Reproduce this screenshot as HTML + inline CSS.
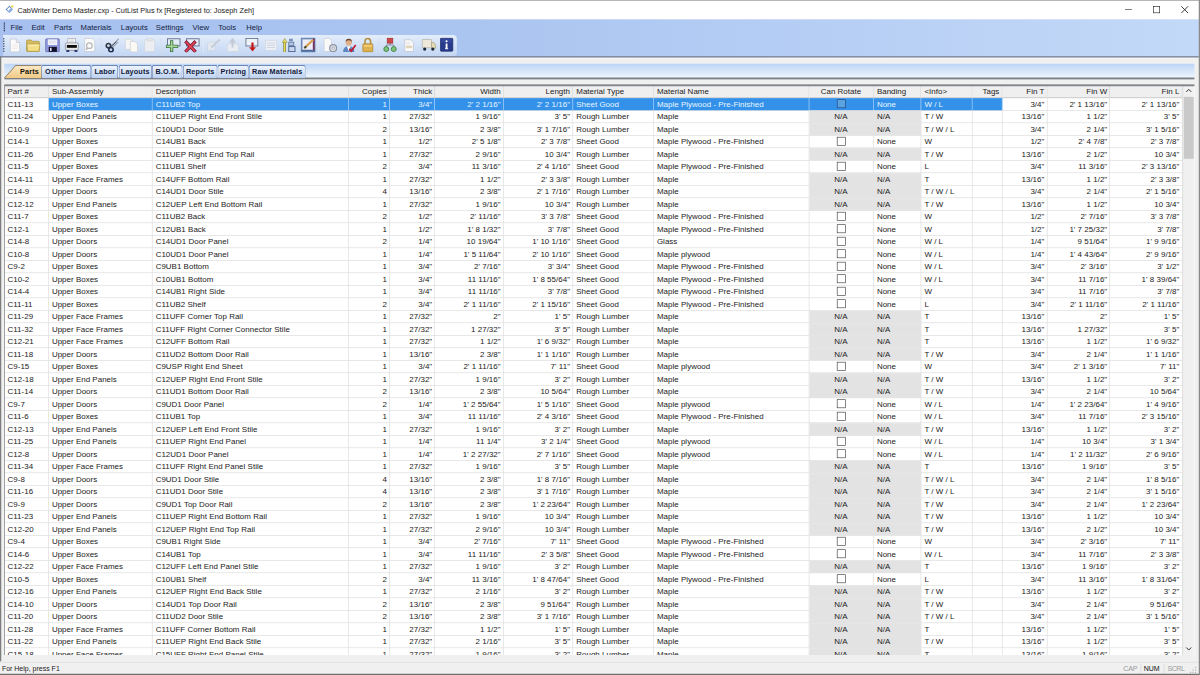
<!DOCTYPE html><html><head><meta charset="utf-8"><title>CutList</title><style>
*{margin:0;padding:0;box-sizing:border-box}
html,body{width:1200px;height:675px;overflow:hidden;background:#f0f0f0}
#w{position:absolute;left:0;top:0;width:1920px;height:1080px;transform:scale(0.625);transform-origin:0 0;background:#f0f0f0;font-family:"Liberation Sans",sans-serif;overflow:hidden}
.a{position:absolute}
#title{left:0;top:0;width:1920px;height:31px;background:#fff;border-top:1px solid #8a8a8a}
#title .t{left:28px;top:8.5px;font-size:11.7px;color:#1a1a1a;white-space:nowrap}
#bar{left:0;top:31px;width:1920px;height:60px;background:linear-gradient(to right,#a7c0ef 0%,#abc5f1 40%,#c3d9f8 100%)}
#menu{left:0;top:31px;height:24px;width:1920px}
.mi{position:absolute;top:7px;font-size:12.3px;color:#14223f;white-space:nowrap}
#tb{left:5px;top:56px;width:726px;height:34px;border-radius:0 6px 6px 0;background:linear-gradient(#e3edfb,#cfdff6 60%,#c3d6f3)}
#tbline{left:0;top:89.5px;width:1918px;height:2.2px;background:#6f798c;box-shadow:0 1.5px 0 #fafbfc}
.grip{position:absolute;width:2px;height:2px;background:#33405a}
#strip{left:7px;top:102px;width:1904px;height:23px;background:linear-gradient(#bdd5f6,#f0f6fe)}
#stripline{left:7px;top:124px;width:1904px;height:3px;background:#7b8087}
.tab{position:absolute;top:104px;height:21px;border:1px solid #4f6b9f;border-bottom:none;border-radius:4px 4px 0 0;background:linear-gradient(#f0f5fd,#bcd1f1);font-weight:bold;font-size:11.6px;letter-spacing:0.25px;color:#101a3c;text-align:center;padding-top:2.6px;white-space:nowrap}
#grid{left:7px;top:136px;width:1904px;height:912px;background:#fff;border-left:1.5px solid #6c6f75;border-top:1.5px solid #85888d;overflow:hidden}
.hd{position:absolute;top:0;height:20px;border-top:1px solid #fafafa;background:#efefef;border-right:1px solid #cfcfcf;border-bottom:1px solid #b8b8b8;font-size:12.7px;letter-spacing:0.06px;color:#222;padding-top:1.8px;white-space:nowrap;overflow:hidden}
.c{position:absolute;height:20px;border-right:1px solid #dadada;border-bottom:1px solid #dadada;font-size:12.7px;letter-spacing:0.06px;color:#222;padding-top:3.15px;white-space:nowrap;overflow:hidden}
.l{text-align:left;padding-left:5.5px}
.r{text-align:right;padding-right:3.5px}
.ce{text-align:center}
.na{background:#e3e3e3;border-right-color:#e3e3e3;border-bottom-color:#e3e3e3}
.sel{background:#3391e9;color:#eaf6ff;border-right-color:#c4e2ff;border-bottom-color:#dadada}
.cb{display:inline-block;width:14px;height:14px;border:1.5px solid #3a3a3a;background:#fff;margin-top:-0.5px;margin-left:1px;vertical-align:top}
.sel .cb{background:#5aa2e0;border-color:#173c78}
#sb{left:1892px;top:136px;width:18px;height:912px;background:#f0f0f0;border-left:1px solid #d6d6d6}
#thumb{left:1893.5px;top:154.5px;width:16px;height:99px;background:#c9c9c9}
#status{left:0;top:1059px;width:1920px;height:21px;background:#f0f0f0;border-top:1px solid #d8d8d8;border-bottom:2px solid #6e6e6e}
.st{position:absolute;top:4px;font-size:11.2px;color:#222;white-space:nowrap}
</style></head><body><div id="w">
<div class="a" style="left:0;top:90px;width:2px;height:968px;background:#7d7d7d;z-index:5"></div>
<div class="a" style="left:1918px;top:0;width:2px;height:1080px;background:#8a8a8a;z-index:5"></div>
<div class="a" id="title">
<svg class="a" style="left:7px;top:6px" width="16" height="16" viewBox="0 0 16 16"><path d="M2 8 L8 2 L11 5 L5 11 Z" fill="#5b86c8"/><path d="M5 11 L11 5 L14 8 L8 14 Z" fill="#8fb0e0"/><path d="M4 8 L8 4 L10 6 L6 10 Z" fill="#fff"/><circle cx="12.5" cy="3.5" r="2" fill="#f0d860"/></svg>
<div class="a t">CabWriter Demo Master.cxp - CutList Plus fx [Registered to: Joseph Zeh]</div>
<div class="a" style="left:1800px;top:13.5px;width:10.5px;height:1.2px;background:#333"></div>
<div class="a" style="left:1845px;top:9px;width:11px;height:11px;border:1.5px solid #222"></div>
<svg class="a" style="left:1889px;top:8px" width="13" height="13" viewBox="0 0 13 13"><path d="M1 1 L12 12 M12 1 L1 12" stroke="#222" stroke-width="1.4"/></svg>
</div>
<div class="a" id="bar"></div>
<div class="grip" style="left:6px;top:36px"></div>
<div class="grip" style="left:6px;top:39px"></div>
<div class="grip" style="left:6px;top:42px"></div>
<div class="grip" style="left:6px;top:45px"></div>
<div class="grip" style="left:6px;top:48px"></div>
<div class="mi" style="left:16.8px;top:36.5px">File</div>
<div class="mi" style="left:50.4px;top:36.5px">Edit</div>
<div class="mi" style="left:86.6px;top:36.5px">Parts</div>
<div class="mi" style="left:128.8px;top:36.5px">Materials</div>
<div class="mi" style="left:193.4px;top:36.5px">Layouts</div>
<div class="mi" style="left:249.4px;top:36.5px">Settings</div>
<div class="mi" style="left:308px;top:36.5px">View</div>
<div class="mi" style="left:349px;top:36.5px">Tools</div>
<div class="mi" style="left:394px;top:36.5px">Help</div>
<div class="a" id="tb"></div>
<div class="a" id="tbline"></div>
<div class="grip" style="left:5px;top:61px"></div>
<div class="grip" style="left:5px;top:65px"></div>
<div class="grip" style="left:5px;top:69px"></div>
<div class="grip" style="left:5px;top:73px"></div>
<div class="grip" style="left:5px;top:77px"></div>
<div class="grip" style="left:5px;top:81px"></div>
<svg class="a" style="left:15px;top:60px" width="24" height="24" viewBox="0 0 24 24"><path d="M1.5 2.5 H11 L16.5 8 V23 H1.5 Z" fill="#fbfbfd" stroke="#b9bcc6" stroke-width="1"/><path d="M11 2.5 V8 H16.5" fill="#e8e8ee" stroke="#b9bcc6" stroke-width="1"/><path d="M4 12 H14 M4 15 H14 M4 18 H12" stroke="#eadfd8" stroke-width="1"/></svg>
<svg class="a" style="left:41px;top:60px" width="24" height="24" viewBox="0 0 24 24"><path d="M1.5 6 Q1.5 4 3.5 4 H9 L11 6 H20 Q22 6 22 8 V21 Q22 22.5 20.5 22.5 H3 Q1.5 22.5 1.5 21 Z" fill="#d6bc60" stroke="#a08a40" stroke-width="1"/><path d="M2 10 H23 L21.5 22 H3 Z" fill="#f3dd85" stroke="#b09840" stroke-width="1"/><path d="M4 13 H20" stroke="#f9ebb0" stroke-width="2"/></svg>
<svg class="a" style="left:72px;top:60px" width="24" height="24" viewBox="0 0 24 24"><rect x="1" y="2" width="22" height="21" rx="1.5" fill="#8f97dc" stroke="#5c63a8" stroke-width="1"/><rect x="4.5" y="3" width="15" height="9" fill="#f4f4fb"/><path d="M6 6 H18 M6 9 H18" stroke="#c8c8e0" stroke-width="1"/><rect x="6" y="15" width="13" height="8" fill="#12122e"/><rect x="8" y="16.5" width="2.5" height="5" fill="#e8e8f8"/></svg>
<svg class="a" style="left:103px;top:60px" width="24" height="24" viewBox="0 0 24 24"><rect x="5.5" y="1.5" width="12" height="8" fill="#fafafa" stroke="#9aa0aa" stroke-width="1"/><path d="M7.5 4 H15.5 M7.5 6.5 H15.5" stroke="#bbb" stroke-width="0.8"/><rect x="1.5" y="8.5" width="21" height="12" rx="3" fill="#e6e8ec" stroke="#6f7480" stroke-width="1"/><rect x="4" y="12" width="16" height="4.5" fill="#0c0c0c"/><rect x="3" y="20" width="5" height="3" rx="1" fill="#2b3b6e"/><rect x="16" y="20" width="5" height="3" rx="1" fill="#2b3b6e"/></svg>
<svg class="a" style="left:134px;top:60px" width="24" height="24" viewBox="0 0 24 24"><path d="M1.5 1.5 H14 L17.5 5 V22.5 H1.5 Z" fill="#fbfbfb" stroke="#c0c4cc" stroke-width="1"/><circle cx="9" cy="13" r="4.5" fill="none" stroke="#b8b8b8" stroke-width="2"/><path d="M6 17 L3.5 19.5" stroke="#aaa" stroke-width="2"/></svg>
<svg class="a" style="left:168px;top:60px" width="24" height="24" viewBox="0 0 24 24"><path d="M9 15 L22 2 M10 17.5 L21 7" stroke="#9aa3b2" stroke-width="2"/><path d="M9 15 L18 7" stroke="#4a5060" stroke-width="1.5"/><circle cx="5.5" cy="13" r="3.5" fill="none" stroke="#2e3340" stroke-width="2.6"/><circle cx="9.5" cy="19.5" r="3.5" fill="none" stroke="#1f3050" stroke-width="2.6"/></svg>
<svg class="a" style="left:199px;top:60px" width="24" height="24" viewBox="0 0 24 24"><path d="M1.5 2.5 H9 L12 5.5 V19 H1.5 Z" fill="#f5f5f5" stroke="#c9ccd3" stroke-width="1"/><path d="M9.5 6.5 H17 L21 10.5 V23 H9.5 Z" fill="#fbf9f3" stroke="#c9ccd3" stroke-width="1"/></svg>
<svg class="a" style="left:230px;top:60px" width="24" height="24" viewBox="0 0 24 24"><rect x="1.5" y="3.5" width="16" height="19" rx="1" fill="#eceef2" stroke="#cfd3da" stroke-width="1"/><rect x="5.5" y="1.5" width="8" height="4" fill="#e6e8ec" stroke="#cfd3da" stroke-width="1"/></svg>
<svg class="a" style="left:264px;top:60px" width="26" height="24" viewBox="0 0 26 24"><rect x="4" y="2" width="20" height="11.5" fill="#e4ecf8" stroke="#6a7a96" stroke-width="1.6"/><path d="M10.6 4.5 V23 M1.5 14.1 H21" stroke="#3d6e40" stroke-width="5.2"/><path d="M10.6 5.5 V22 M2.5 14.1 H20" stroke="#a6d89a" stroke-width="2.6"/></svg>
<svg class="a" style="left:294px;top:60px" width="26" height="24" viewBox="0 0 26 24"><rect x="4.5" y="2" width="20" height="11.5" fill="#e8ecf6" stroke="#6a7a96" stroke-width="1.6"/><path d="M2.5 6 L19 23 M19 6 L2.5 23" stroke="#7a1c38" stroke-width="5.2"/><path d="M3.3 6.8 L18.2 22.2 M18.2 6.8 L3.3 22.2" stroke="#e84454" stroke-width="2.6"/></svg>
<svg class="a" style="left:330px;top:60px" width="24" height="24" viewBox="0 0 24 24"><path d="M2 10 L6 7 H14 V21 H2 Z" fill="#e3e8f0" stroke="#c8d0dc" stroke-width="1"/><path d="M8 16 L22 3" stroke="#c6ccd8" stroke-width="3"/></svg>
<svg class="a" style="left:362px;top:60px" width="24" height="24" viewBox="0 0 24 24"><rect x="1.5" y="10.5" width="18" height="12" fill="#e8ecf3" stroke="#cdd3dd" stroke-width="1"/><path d="M10 16 V5 M6 8 L10 3 L14 8" fill="none" stroke="#c3cad6" stroke-width="3"/></svg>
<svg class="a" style="left:392px;top:60px" width="24" height="24" viewBox="0 0 24 24"><rect x="1.5" y="1.5" width="19" height="12" fill="#eef2f9" stroke="#5c6b86" stroke-width="1.3"/><path d="M12 8 V18" stroke="#c01818" stroke-width="3.5"/><path d="M6.5 15.5 L12 22.5 L17.5 15.5 Z" fill="#c81c1c"/></svg>
<svg class="a" style="left:422px;top:60px" width="24" height="24" viewBox="0 0 24 24"><rect x="2.5" y="4.5" width="18" height="16" fill="#eceff5" stroke="#d0d6e0" stroke-width="1"/><path d="M5 9 H18 M5 12.5 H18 M5 16 H18" stroke="#cdd3de" stroke-width="1.5"/></svg>
<svg class="a" style="left:451px;top:60px" width="24" height="24" viewBox="0 0 24 24"><path d="M4.5 23 V6" stroke="#6f7030" stroke-width="4.2"/><path d="M4.5 23 V6" stroke="#e6dc58" stroke-width="2.4"/><path d="M0.5 8 L4.5 1.5 L8.5 8 Z" fill="#e8dc60" stroke="#8a8230" stroke-width="0.8"/><rect x="11.5" y="2" width="6" height="4" fill="#7890b8"/><rect x="11" y="7.5" width="8" height="5.5" fill="#b8c8e4" stroke="#5f78a4" stroke-width="1.4"/><rect x="11" y="14.5" width="10" height="8" fill="#c8d6ec" stroke="#4f6896" stroke-width="1.6"/></svg>
<svg class="a" style="left:481px;top:60px" width="24" height="24" viewBox="0 0 24 24"><rect x="1.5" y="1.5" width="21" height="21" fill="#eeeefa" stroke="#6d8ab6" stroke-width="3"/><path d="M21 1.5 V22.5" stroke="#7a3462" stroke-width="3"/><path d="M1.5 21 H22.5" stroke="#4f6c9c" stroke-width="3"/><path d="M6 17 L20 3.5" stroke="#d8a050" stroke-width="3.4"/><path d="M6 17 L9 14" stroke="#3e4a40" stroke-width="3"/></svg>
<svg class="a" style="left:517px;top:60px" width="24" height="24" viewBox="0 0 24 24"><path d="M1.5 1.5 H10 L13.5 5 V22.5 H1.5 Z" fill="#fafafa" stroke="#c4c8d0" stroke-width="1"/><circle cx="16" cy="17" r="5.5" fill="#dfe3ea" stroke="#8e96a4" stroke-width="2"/><circle cx="16" cy="17" r="2" fill="#fff" stroke="#7a8290" stroke-width="1"/></svg>
<svg class="a" style="left:547px;top:60px" width="24" height="24" viewBox="0 0 24 24"><path d="M2 23 Q2 14 11 14 Q20 14 20 23 Z" fill="#5c86c4"/><path d="M8 14 L11 22 L14 14 Z" fill="#fff"/><circle cx="11" cy="8" r="5" fill="#e2b08a"/><path d="M6 7 Q6 2 11 2 Q16 2 16 7 Q14 4 11 4.5 Q8 4 6 7 Z" fill="#6a4028"/><path d="M12 18 L15 22 L22 12" fill="none" stroke="#c01c2c" stroke-width="2.6"/></svg>
<svg class="a" style="left:579px;top:60px" width="24" height="24" viewBox="0 0 24 24"><path d="M5 11 V7 Q5 1.5 9.5 1.5 Q14 1.5 14 7 V11" fill="none" stroke="#b49040" stroke-width="2.6"/><rect x="1.5" y="10" width="16" height="13" rx="1.5" fill="#ddb050" stroke="#a87e28" stroke-width="1"/><rect x="3" y="12" width="13" height="3" fill="#f0cc70"/></svg>
<svg class="a" style="left:613px;top:60px" width="24" height="24" viewBox="0 0 24 24"><path d="M11 8 V12 M5 17 V12 H17 V17" fill="none" stroke="#7c8898" stroke-width="1.5"/><rect x="6.5" y="1" width="9" height="8" fill="#d04848" stroke="#9a2a2a" stroke-width="1"/><circle cx="5" cy="18.5" r="4" fill="#7cc47a" stroke="#3f7a3f" stroke-width="1.3"/><circle cx="17" cy="18.5" r="4" fill="#7cc47a" stroke="#3f7a3f" stroke-width="1.3"/></svg>
<svg class="a" style="left:646px;top:60px" width="24" height="24" viewBox="0 0 24 24"><path d="M1.5 3.5 H11 L15.5 8 V22.5 H1.5 Z" fill="#f9f9f9" stroke="#b9bfca" stroke-width="1"/><rect x="3.5" y="13" width="10" height="4" fill="#e0d4bc"/><path d="M3.5 9 H11" stroke="#ccc" stroke-width="1"/></svg>
<svg class="a" style="left:674px;top:60px" width="24" height="24" viewBox="0 0 24 24"><rect x="1.5" y="3.5" width="15" height="13" fill="#ece8dc" stroke="#b0ab9c" stroke-width="1"/><path d="M16.5 8 H20 L23 12 V17 H16.5 Z" fill="#e4dcb8" stroke="#a09870" stroke-width="1"/><circle cx="5.5" cy="18.5" r="2.6" fill="#1e2838"/><circle cx="18.5" cy="18.5" r="2.6" fill="#1e2838"/></svg>
<svg class="a" style="left:704px;top:60px" width="24" height="24" viewBox="0 0 24 24"><rect x="0.5" y="1" width="20" height="21" rx="1.5" fill="#26398a" stroke="#17245c" stroke-width="1"/><rect x="2" y="2.5" width="17" height="6" fill="#3a50a8" opacity="0.6"/><circle cx="10.5" cy="6" r="1.7" fill="#fff"/><path d="M10.5 9.5 V18" stroke="#fff" stroke-width="3"/><path d="M8 18 H13" stroke="#fff" stroke-width="1.5"/></svg>
<div class="a" style="left:161px;top:61px;width:1px;height:24px;background:#a9b8d0;border-right:1px solid #f4f8ff"></div>
<div class="a" style="left:257px;top:61px;width:1px;height:24px;background:#a9b8d0;border-right:1px solid #f4f8ff"></div>
<div class="a" style="left:325px;top:61px;width:1px;height:24px;background:#a9b8d0;border-right:1px solid #f4f8ff"></div>
<div class="a" style="left:509px;top:61px;width:1px;height:24px;background:#a9b8d0;border-right:1px solid #f4f8ff"></div>
<div class="a" style="left:606px;top:61px;width:1px;height:24px;background:#a9b8d0;border-right:1px solid #f4f8ff"></div>
<div class="a" id="strip"></div>
<div class="a" id="stripline"></div>
<div class="tab" style="left:65.6px;width:80.4px">Other Items</div>
<div class="tab" style="left:146.4px;width:42.900000000000006px">Labor</div>
<div class="tab" style="left:189.6px;width:53.599999999999994px">Layouts</div>
<div class="tab" style="left:243.2px;width:49.30000000000001px">B.O.M.</div>
<div class="tab" style="left:292.8px;width:55.0px">Reports</div>
<div class="tab" style="left:348px;width:50.39999999999998px">Pricing</div>
<div class="tab" style="left:398.4px;width:90.40000000000003px">Raw Materials</div>
<div class="a" style="left:6px;top:103px;width:61px;height:22px;background:#8d7b60;clip-path:polygon(0 100%,19px 1px,60px 1px,61px 100%)"></div><div class="a" style="left:6px;top:103px;width:61px;height:22px;background:linear-gradient(#fbeccd,#f1c983);clip-path:polygon(1.6px 100%,19.5px 2px,59.8px 2px,59.8px 100%)"></div>
<div class="a" style="left:32px;top:106.5px;font-weight:bold;font-size:11.6px;letter-spacing:0.25px;color:#1a140a">Parts</div>
<div class="a" style="left:7px;top:135px;width:1904px;height:2.5px;background:#7f8388;z-index:3"></div>
<div class="a" id="grid">
<div class="hd l" style="left:-1.5px;width:71.0px">Part #</div>
<div class="hd l" style="left:69.5px;width:166.0px">Sub-Assembly</div>
<div class="hd l" style="left:235.5px;width:314.0px">Description</div>
<div class="hd r" style="left:549.5px;width:66.0px">Copies</div>
<div class="hd r" style="left:615.5px;width:72.5px">Thick</div>
<div class="hd r" style="left:688.0px;width:109.5px">Width</div>
<div class="hd r" style="left:797.5px;width:111.0px">Length</div>
<div class="hd l" style="left:908.5px;width:129.0px">Material Type</div>
<div class="hd l" style="left:1037.5px;width:249.0px">Material Name</div>
<div class="hd ce" style="left:1286.5px;width:103.0px">Can Rotate</div>
<div class="hd l" style="left:1389.5px;width:76.0px">Banding</div>
<div class="hd l" style="left:1465.5px;width:82.0px">&lt;Info&gt;</div>
<div class="hd r" style="left:1547.5px;width:48.0px">Tags</div>
<div class="hd r" style="left:1595.5px;width:72.0px">Fin T</div>
<div class="hd r" style="left:1667.5px;width:100.5px">Fin W</div>
<div class="hd r" style="left:1768.0px;width:115.5px">Fin L</div>
<div class="c l" style="left:-1.5px;top:19.5px;width:71.0px">C11-13</div>
<div class="c l sel" style="left:69.5px;top:19.5px;width:166.0px">Upper Boxes</div>
<div class="c l sel" style="left:235.5px;top:19.5px;width:314.0px">C11UB2 Top</div>
<div class="c r sel" style="left:549.5px;top:19.5px;width:66.0px">1</div>
<div class="c r sel" style="left:615.5px;top:19.5px;width:72.5px">3/4"</div>
<div class="c r sel" style="left:688.0px;top:19.5px;width:109.5px">2' 2 1/16"</div>
<div class="c r sel" style="left:797.5px;top:19.5px;width:111.0px">2' 2 1/16"</div>
<div class="c l sel" style="left:908.5px;top:19.5px;width:129.0px">Sheet Good</div>
<div class="c l sel" style="left:1037.5px;top:19.5px;width:249.0px">Maple Plywood - Pre-Finished</div>
<div class="c ce sel" style="left:1286.5px;top:19.5px;width:103.0px"><span class="cb"></span></div>
<div class="c l sel" style="left:1389.5px;top:19.5px;width:76.0px">None</div>
<div class="c l sel" style="left:1465.5px;top:19.5px;width:82.0px">W / L</div>
<div class="c r sel" style="left:1547.5px;top:19.5px;width:48.0px"></div>
<div class="c r" style="left:1595.5px;top:19.5px;width:72.0px">3/4"</div>
<div class="c r" style="left:1667.5px;top:19.5px;width:100.5px">2' 1 13/16"</div>
<div class="c r" style="left:1768.0px;top:19.5px;width:115.5px">2' 1 13/16"</div>
<div class="c l" style="left:-1.5px;top:39.5px;width:71.0px">C11-24</div>
<div class="c l" style="left:69.5px;top:39.5px;width:166.0px">Upper End Panels</div>
<div class="c l" style="left:235.5px;top:39.5px;width:314.0px">C11UEP Right End Front Stile</div>
<div class="c r" style="left:549.5px;top:39.5px;width:66.0px">1</div>
<div class="c r" style="left:615.5px;top:39.5px;width:72.5px">27/32"</div>
<div class="c r" style="left:688.0px;top:39.5px;width:109.5px">1 9/16"</div>
<div class="c r" style="left:797.5px;top:39.5px;width:111.0px">3' 5"</div>
<div class="c l" style="left:908.5px;top:39.5px;width:129.0px">Rough Lumber</div>
<div class="c l" style="left:1037.5px;top:39.5px;width:249.0px">Maple</div>
<div class="c ce na" style="left:1286.5px;top:39.5px;width:103.0px">N/A</div>
<div class="c l na" style="left:1389.5px;top:39.5px;width:76.0px">N/A</div>
<div class="c l" style="left:1465.5px;top:39.5px;width:82.0px">T / W</div>
<div class="c r" style="left:1547.5px;top:39.5px;width:48.0px"></div>
<div class="c r" style="left:1595.5px;top:39.5px;width:72.0px">13/16"</div>
<div class="c r" style="left:1667.5px;top:39.5px;width:100.5px">1 1/2"</div>
<div class="c r" style="left:1768.0px;top:39.5px;width:115.5px">3' 5"</div>
<div class="c l" style="left:-1.5px;top:59.5px;width:71.0px">C10-9</div>
<div class="c l" style="left:69.5px;top:59.5px;width:166.0px">Upper Doors</div>
<div class="c l" style="left:235.5px;top:59.5px;width:314.0px">C10UD1 Door Stile</div>
<div class="c r" style="left:549.5px;top:59.5px;width:66.0px">2</div>
<div class="c r" style="left:615.5px;top:59.5px;width:72.5px">13/16"</div>
<div class="c r" style="left:688.0px;top:59.5px;width:109.5px">2 3/8"</div>
<div class="c r" style="left:797.5px;top:59.5px;width:111.0px">3' 1 7/16"</div>
<div class="c l" style="left:908.5px;top:59.5px;width:129.0px">Rough Lumber</div>
<div class="c l" style="left:1037.5px;top:59.5px;width:249.0px">Maple</div>
<div class="c ce na" style="left:1286.5px;top:59.5px;width:103.0px">N/A</div>
<div class="c l na" style="left:1389.5px;top:59.5px;width:76.0px">N/A</div>
<div class="c l" style="left:1465.5px;top:59.5px;width:82.0px">T / W / L</div>
<div class="c r" style="left:1547.5px;top:59.5px;width:48.0px"></div>
<div class="c r" style="left:1595.5px;top:59.5px;width:72.0px">3/4"</div>
<div class="c r" style="left:1667.5px;top:59.5px;width:100.5px">2 1/4"</div>
<div class="c r" style="left:1768.0px;top:59.5px;width:115.5px">3' 1 5/16"</div>
<div class="c l" style="left:-1.5px;top:79.5px;width:71.0px">C14-1</div>
<div class="c l" style="left:69.5px;top:79.5px;width:166.0px">Upper Boxes</div>
<div class="c l" style="left:235.5px;top:79.5px;width:314.0px">C14UB1 Back</div>
<div class="c r" style="left:549.5px;top:79.5px;width:66.0px">1</div>
<div class="c r" style="left:615.5px;top:79.5px;width:72.5px">1/2"</div>
<div class="c r" style="left:688.0px;top:79.5px;width:109.5px">2' 5 1/8"</div>
<div class="c r" style="left:797.5px;top:79.5px;width:111.0px">2' 3 7/8"</div>
<div class="c l" style="left:908.5px;top:79.5px;width:129.0px">Sheet Good</div>
<div class="c l" style="left:1037.5px;top:79.5px;width:249.0px">Maple Plywood - Pre-Finished</div>
<div class="c ce" style="left:1286.5px;top:79.5px;width:103.0px"><span class="cb"></span></div>
<div class="c l" style="left:1389.5px;top:79.5px;width:76.0px">None</div>
<div class="c l" style="left:1465.5px;top:79.5px;width:82.0px">W</div>
<div class="c r" style="left:1547.5px;top:79.5px;width:48.0px"></div>
<div class="c r" style="left:1595.5px;top:79.5px;width:72.0px">1/2"</div>
<div class="c r" style="left:1667.5px;top:79.5px;width:100.5px">2' 4 7/8"</div>
<div class="c r" style="left:1768.0px;top:79.5px;width:115.5px">2' 3 7/8"</div>
<div class="c l" style="left:-1.5px;top:99.5px;width:71.0px">C11-26</div>
<div class="c l" style="left:69.5px;top:99.5px;width:166.0px">Upper End Panels</div>
<div class="c l" style="left:235.5px;top:99.5px;width:314.0px">C11UEP Right End Top Rail</div>
<div class="c r" style="left:549.5px;top:99.5px;width:66.0px">1</div>
<div class="c r" style="left:615.5px;top:99.5px;width:72.5px">27/32"</div>
<div class="c r" style="left:688.0px;top:99.5px;width:109.5px">2 9/16"</div>
<div class="c r" style="left:797.5px;top:99.5px;width:111.0px">10 3/4"</div>
<div class="c l" style="left:908.5px;top:99.5px;width:129.0px">Rough Lumber</div>
<div class="c l" style="left:1037.5px;top:99.5px;width:249.0px">Maple</div>
<div class="c ce na" style="left:1286.5px;top:99.5px;width:103.0px">N/A</div>
<div class="c l na" style="left:1389.5px;top:99.5px;width:76.0px">N/A</div>
<div class="c l" style="left:1465.5px;top:99.5px;width:82.0px">T / W</div>
<div class="c r" style="left:1547.5px;top:99.5px;width:48.0px"></div>
<div class="c r" style="left:1595.5px;top:99.5px;width:72.0px">13/16"</div>
<div class="c r" style="left:1667.5px;top:99.5px;width:100.5px">2 1/2"</div>
<div class="c r" style="left:1768.0px;top:99.5px;width:115.5px">10 3/4"</div>
<div class="c l" style="left:-1.5px;top:119.5px;width:71.0px">C11-5</div>
<div class="c l" style="left:69.5px;top:119.5px;width:166.0px">Upper Boxes</div>
<div class="c l" style="left:235.5px;top:119.5px;width:314.0px">C11UB1 Shelf</div>
<div class="c r" style="left:549.5px;top:119.5px;width:66.0px">2</div>
<div class="c r" style="left:615.5px;top:119.5px;width:72.5px">3/4"</div>
<div class="c r" style="left:688.0px;top:119.5px;width:109.5px">11 3/16"</div>
<div class="c r" style="left:797.5px;top:119.5px;width:111.0px">2' 4 1/16"</div>
<div class="c l" style="left:908.5px;top:119.5px;width:129.0px">Sheet Good</div>
<div class="c l" style="left:1037.5px;top:119.5px;width:249.0px">Maple Plywood - Pre-Finished</div>
<div class="c ce" style="left:1286.5px;top:119.5px;width:103.0px"><span class="cb"></span></div>
<div class="c l" style="left:1389.5px;top:119.5px;width:76.0px">None</div>
<div class="c l" style="left:1465.5px;top:119.5px;width:82.0px">L</div>
<div class="c r" style="left:1547.5px;top:119.5px;width:48.0px"></div>
<div class="c r" style="left:1595.5px;top:119.5px;width:72.0px">3/4"</div>
<div class="c r" style="left:1667.5px;top:119.5px;width:100.5px">11 3/16"</div>
<div class="c r" style="left:1768.0px;top:119.5px;width:115.5px">2' 3 13/16"</div>
<div class="c l" style="left:-1.5px;top:139.5px;width:71.0px">C14-11</div>
<div class="c l" style="left:69.5px;top:139.5px;width:166.0px">Upper Face Frames</div>
<div class="c l" style="left:235.5px;top:139.5px;width:314.0px">C14UFF Bottom Rail</div>
<div class="c r" style="left:549.5px;top:139.5px;width:66.0px">1</div>
<div class="c r" style="left:615.5px;top:139.5px;width:72.5px">27/32"</div>
<div class="c r" style="left:688.0px;top:139.5px;width:109.5px">1 1/2"</div>
<div class="c r" style="left:797.5px;top:139.5px;width:111.0px">2' 3 3/8"</div>
<div class="c l" style="left:908.5px;top:139.5px;width:129.0px">Rough Lumber</div>
<div class="c l" style="left:1037.5px;top:139.5px;width:249.0px">Maple</div>
<div class="c ce na" style="left:1286.5px;top:139.5px;width:103.0px">N/A</div>
<div class="c l na" style="left:1389.5px;top:139.5px;width:76.0px">N/A</div>
<div class="c l" style="left:1465.5px;top:139.5px;width:82.0px">T</div>
<div class="c r" style="left:1547.5px;top:139.5px;width:48.0px"></div>
<div class="c r" style="left:1595.5px;top:139.5px;width:72.0px">13/16"</div>
<div class="c r" style="left:1667.5px;top:139.5px;width:100.5px">1 1/2"</div>
<div class="c r" style="left:1768.0px;top:139.5px;width:115.5px">2' 3 3/8"</div>
<div class="c l" style="left:-1.5px;top:159.5px;width:71.0px">C14-9</div>
<div class="c l" style="left:69.5px;top:159.5px;width:166.0px">Upper Doors</div>
<div class="c l" style="left:235.5px;top:159.5px;width:314.0px">C14UD1 Door Stile</div>
<div class="c r" style="left:549.5px;top:159.5px;width:66.0px">4</div>
<div class="c r" style="left:615.5px;top:159.5px;width:72.5px">13/16"</div>
<div class="c r" style="left:688.0px;top:159.5px;width:109.5px">2 3/8"</div>
<div class="c r" style="left:797.5px;top:159.5px;width:111.0px">2' 1 7/16"</div>
<div class="c l" style="left:908.5px;top:159.5px;width:129.0px">Rough Lumber</div>
<div class="c l" style="left:1037.5px;top:159.5px;width:249.0px">Maple</div>
<div class="c ce na" style="left:1286.5px;top:159.5px;width:103.0px">N/A</div>
<div class="c l na" style="left:1389.5px;top:159.5px;width:76.0px">N/A</div>
<div class="c l" style="left:1465.5px;top:159.5px;width:82.0px">T / W / L</div>
<div class="c r" style="left:1547.5px;top:159.5px;width:48.0px"></div>
<div class="c r" style="left:1595.5px;top:159.5px;width:72.0px">3/4"</div>
<div class="c r" style="left:1667.5px;top:159.5px;width:100.5px">2 1/4"</div>
<div class="c r" style="left:1768.0px;top:159.5px;width:115.5px">2' 1 5/16"</div>
<div class="c l" style="left:-1.5px;top:179.5px;width:71.0px">C12-12</div>
<div class="c l" style="left:69.5px;top:179.5px;width:166.0px">Upper End Panels</div>
<div class="c l" style="left:235.5px;top:179.5px;width:314.0px">C12UEP Left End Bottom Rail</div>
<div class="c r" style="left:549.5px;top:179.5px;width:66.0px">1</div>
<div class="c r" style="left:615.5px;top:179.5px;width:72.5px">27/32"</div>
<div class="c r" style="left:688.0px;top:179.5px;width:109.5px">1 9/16"</div>
<div class="c r" style="left:797.5px;top:179.5px;width:111.0px">10 3/4"</div>
<div class="c l" style="left:908.5px;top:179.5px;width:129.0px">Rough Lumber</div>
<div class="c l" style="left:1037.5px;top:179.5px;width:249.0px">Maple</div>
<div class="c ce na" style="left:1286.5px;top:179.5px;width:103.0px">N/A</div>
<div class="c l na" style="left:1389.5px;top:179.5px;width:76.0px">N/A</div>
<div class="c l" style="left:1465.5px;top:179.5px;width:82.0px">T / W</div>
<div class="c r" style="left:1547.5px;top:179.5px;width:48.0px"></div>
<div class="c r" style="left:1595.5px;top:179.5px;width:72.0px">13/16"</div>
<div class="c r" style="left:1667.5px;top:179.5px;width:100.5px">1 1/2"</div>
<div class="c r" style="left:1768.0px;top:179.5px;width:115.5px">10 3/4"</div>
<div class="c l" style="left:-1.5px;top:199.5px;width:71.0px">C11-7</div>
<div class="c l" style="left:69.5px;top:199.5px;width:166.0px">Upper Boxes</div>
<div class="c l" style="left:235.5px;top:199.5px;width:314.0px">C11UB2 Back</div>
<div class="c r" style="left:549.5px;top:199.5px;width:66.0px">2</div>
<div class="c r" style="left:615.5px;top:199.5px;width:72.5px">1/2"</div>
<div class="c r" style="left:688.0px;top:199.5px;width:109.5px">2' 11/16"</div>
<div class="c r" style="left:797.5px;top:199.5px;width:111.0px">3' 3 7/8"</div>
<div class="c l" style="left:908.5px;top:199.5px;width:129.0px">Sheet Good</div>
<div class="c l" style="left:1037.5px;top:199.5px;width:249.0px">Maple Plywood - Pre-Finished</div>
<div class="c ce" style="left:1286.5px;top:199.5px;width:103.0px"><span class="cb"></span></div>
<div class="c l" style="left:1389.5px;top:199.5px;width:76.0px">None</div>
<div class="c l" style="left:1465.5px;top:199.5px;width:82.0px">W</div>
<div class="c r" style="left:1547.5px;top:199.5px;width:48.0px"></div>
<div class="c r" style="left:1595.5px;top:199.5px;width:72.0px">1/2"</div>
<div class="c r" style="left:1667.5px;top:199.5px;width:100.5px">2' 7/16"</div>
<div class="c r" style="left:1768.0px;top:199.5px;width:115.5px">3' 3 7/8"</div>
<div class="c l" style="left:-1.5px;top:219.5px;width:71.0px">C12-1</div>
<div class="c l" style="left:69.5px;top:219.5px;width:166.0px">Upper Boxes</div>
<div class="c l" style="left:235.5px;top:219.5px;width:314.0px">C12UB1 Back</div>
<div class="c r" style="left:549.5px;top:219.5px;width:66.0px">1</div>
<div class="c r" style="left:615.5px;top:219.5px;width:72.5px">1/2"</div>
<div class="c r" style="left:688.0px;top:219.5px;width:109.5px">1' 8 1/32"</div>
<div class="c r" style="left:797.5px;top:219.5px;width:111.0px">3' 7/8"</div>
<div class="c l" style="left:908.5px;top:219.5px;width:129.0px">Sheet Good</div>
<div class="c l" style="left:1037.5px;top:219.5px;width:249.0px">Maple Plywood - Pre-Finished</div>
<div class="c ce" style="left:1286.5px;top:219.5px;width:103.0px"><span class="cb"></span></div>
<div class="c l" style="left:1389.5px;top:219.5px;width:76.0px">None</div>
<div class="c l" style="left:1465.5px;top:219.5px;width:82.0px">W</div>
<div class="c r" style="left:1547.5px;top:219.5px;width:48.0px"></div>
<div class="c r" style="left:1595.5px;top:219.5px;width:72.0px">1/2"</div>
<div class="c r" style="left:1667.5px;top:219.5px;width:100.5px">1' 7 25/32"</div>
<div class="c r" style="left:1768.0px;top:219.5px;width:115.5px">3' 7/8"</div>
<div class="c l" style="left:-1.5px;top:239.5px;width:71.0px">C14-8</div>
<div class="c l" style="left:69.5px;top:239.5px;width:166.0px">Upper Doors</div>
<div class="c l" style="left:235.5px;top:239.5px;width:314.0px">C14UD1 Door Panel</div>
<div class="c r" style="left:549.5px;top:239.5px;width:66.0px">2</div>
<div class="c r" style="left:615.5px;top:239.5px;width:72.5px">1/4"</div>
<div class="c r" style="left:688.0px;top:239.5px;width:109.5px">10 19/64"</div>
<div class="c r" style="left:797.5px;top:239.5px;width:111.0px">1' 10 1/16"</div>
<div class="c l" style="left:908.5px;top:239.5px;width:129.0px">Sheet Good</div>
<div class="c l" style="left:1037.5px;top:239.5px;width:249.0px">Glass</div>
<div class="c ce" style="left:1286.5px;top:239.5px;width:103.0px"><span class="cb"></span></div>
<div class="c l" style="left:1389.5px;top:239.5px;width:76.0px">None</div>
<div class="c l" style="left:1465.5px;top:239.5px;width:82.0px">W / L</div>
<div class="c r" style="left:1547.5px;top:239.5px;width:48.0px"></div>
<div class="c r" style="left:1595.5px;top:239.5px;width:72.0px">1/4"</div>
<div class="c r" style="left:1667.5px;top:239.5px;width:100.5px">9 51/64"</div>
<div class="c r" style="left:1768.0px;top:239.5px;width:115.5px">1' 9 9/16"</div>
<div class="c l" style="left:-1.5px;top:259.5px;width:71.0px">C10-8</div>
<div class="c l" style="left:69.5px;top:259.5px;width:166.0px">Upper Doors</div>
<div class="c l" style="left:235.5px;top:259.5px;width:314.0px">C10UD1 Door Panel</div>
<div class="c r" style="left:549.5px;top:259.5px;width:66.0px">1</div>
<div class="c r" style="left:615.5px;top:259.5px;width:72.5px">1/4"</div>
<div class="c r" style="left:688.0px;top:259.5px;width:109.5px">1' 5 11/64"</div>
<div class="c r" style="left:797.5px;top:259.5px;width:111.0px">2' 10 1/16"</div>
<div class="c l" style="left:908.5px;top:259.5px;width:129.0px">Sheet Good</div>
<div class="c l" style="left:1037.5px;top:259.5px;width:249.0px">Maple plywood</div>
<div class="c ce" style="left:1286.5px;top:259.5px;width:103.0px"><span class="cb"></span></div>
<div class="c l" style="left:1389.5px;top:259.5px;width:76.0px">None</div>
<div class="c l" style="left:1465.5px;top:259.5px;width:82.0px">W / L</div>
<div class="c r" style="left:1547.5px;top:259.5px;width:48.0px"></div>
<div class="c r" style="left:1595.5px;top:259.5px;width:72.0px">1/4"</div>
<div class="c r" style="left:1667.5px;top:259.5px;width:100.5px">1' 4 43/64"</div>
<div class="c r" style="left:1768.0px;top:259.5px;width:115.5px">2' 9 9/16"</div>
<div class="c l" style="left:-1.5px;top:279.5px;width:71.0px">C9-2</div>
<div class="c l" style="left:69.5px;top:279.5px;width:166.0px">Upper Boxes</div>
<div class="c l" style="left:235.5px;top:279.5px;width:314.0px">C9UB1 Bottom</div>
<div class="c r" style="left:549.5px;top:279.5px;width:66.0px">1</div>
<div class="c r" style="left:615.5px;top:279.5px;width:72.5px">3/4"</div>
<div class="c r" style="left:688.0px;top:279.5px;width:109.5px">2' 7/16"</div>
<div class="c r" style="left:797.5px;top:279.5px;width:111.0px">3' 3/4"</div>
<div class="c l" style="left:908.5px;top:279.5px;width:129.0px">Sheet Good</div>
<div class="c l" style="left:1037.5px;top:279.5px;width:249.0px">Maple Plywood - Pre-Finished</div>
<div class="c ce" style="left:1286.5px;top:279.5px;width:103.0px"><span class="cb"></span></div>
<div class="c l" style="left:1389.5px;top:279.5px;width:76.0px">None</div>
<div class="c l" style="left:1465.5px;top:279.5px;width:82.0px">W / L</div>
<div class="c r" style="left:1547.5px;top:279.5px;width:48.0px"></div>
<div class="c r" style="left:1595.5px;top:279.5px;width:72.0px">3/4"</div>
<div class="c r" style="left:1667.5px;top:279.5px;width:100.5px">2' 3/16"</div>
<div class="c r" style="left:1768.0px;top:279.5px;width:115.5px">3' 1/2"</div>
<div class="c l" style="left:-1.5px;top:299.5px;width:71.0px">C10-2</div>
<div class="c l" style="left:69.5px;top:299.5px;width:166.0px">Upper Boxes</div>
<div class="c l" style="left:235.5px;top:299.5px;width:314.0px">C10UB1 Bottom</div>
<div class="c r" style="left:549.5px;top:299.5px;width:66.0px">1</div>
<div class="c r" style="left:615.5px;top:299.5px;width:72.5px">3/4"</div>
<div class="c r" style="left:688.0px;top:299.5px;width:109.5px">11 11/16"</div>
<div class="c r" style="left:797.5px;top:299.5px;width:111.0px">1' 8 55/64"</div>
<div class="c l" style="left:908.5px;top:299.5px;width:129.0px">Sheet Good</div>
<div class="c l" style="left:1037.5px;top:299.5px;width:249.0px">Maple Plywood - Pre-Finished</div>
<div class="c ce" style="left:1286.5px;top:299.5px;width:103.0px"><span class="cb"></span></div>
<div class="c l" style="left:1389.5px;top:299.5px;width:76.0px">None</div>
<div class="c l" style="left:1465.5px;top:299.5px;width:82.0px">W / L</div>
<div class="c r" style="left:1547.5px;top:299.5px;width:48.0px"></div>
<div class="c r" style="left:1595.5px;top:299.5px;width:72.0px">3/4"</div>
<div class="c r" style="left:1667.5px;top:299.5px;width:100.5px">11 7/16"</div>
<div class="c r" style="left:1768.0px;top:299.5px;width:115.5px">1' 8 39/64"</div>
<div class="c l" style="left:-1.5px;top:319.5px;width:71.0px">C14-4</div>
<div class="c l" style="left:69.5px;top:319.5px;width:166.0px">Upper Boxes</div>
<div class="c l" style="left:235.5px;top:319.5px;width:314.0px">C14UB1 Right Side</div>
<div class="c r" style="left:549.5px;top:319.5px;width:66.0px">1</div>
<div class="c r" style="left:615.5px;top:319.5px;width:72.5px">3/4"</div>
<div class="c r" style="left:688.0px;top:319.5px;width:109.5px">11 11/16"</div>
<div class="c r" style="left:797.5px;top:319.5px;width:111.0px">3' 7/8"</div>
<div class="c l" style="left:908.5px;top:319.5px;width:129.0px">Sheet Good</div>
<div class="c l" style="left:1037.5px;top:319.5px;width:249.0px">Maple Plywood - Pre-Finished</div>
<div class="c ce" style="left:1286.5px;top:319.5px;width:103.0px"><span class="cb"></span></div>
<div class="c l" style="left:1389.5px;top:319.5px;width:76.0px">None</div>
<div class="c l" style="left:1465.5px;top:319.5px;width:82.0px">W</div>
<div class="c r" style="left:1547.5px;top:319.5px;width:48.0px"></div>
<div class="c r" style="left:1595.5px;top:319.5px;width:72.0px">3/4"</div>
<div class="c r" style="left:1667.5px;top:319.5px;width:100.5px">11 7/16"</div>
<div class="c r" style="left:1768.0px;top:319.5px;width:115.5px">3' 7/8"</div>
<div class="c l" style="left:-1.5px;top:339.5px;width:71.0px">C11-11</div>
<div class="c l" style="left:69.5px;top:339.5px;width:166.0px">Upper Boxes</div>
<div class="c l" style="left:235.5px;top:339.5px;width:314.0px">C11UB2 Shelf</div>
<div class="c r" style="left:549.5px;top:339.5px;width:66.0px">2</div>
<div class="c r" style="left:615.5px;top:339.5px;width:72.5px">3/4"</div>
<div class="c r" style="left:688.0px;top:339.5px;width:109.5px">2' 1 11/16"</div>
<div class="c r" style="left:797.5px;top:339.5px;width:111.0px">2' 1 15/16"</div>
<div class="c l" style="left:908.5px;top:339.5px;width:129.0px">Sheet Good</div>
<div class="c l" style="left:1037.5px;top:339.5px;width:249.0px">Maple Plywood - Pre-Finished</div>
<div class="c ce" style="left:1286.5px;top:339.5px;width:103.0px"><span class="cb"></span></div>
<div class="c l" style="left:1389.5px;top:339.5px;width:76.0px">None</div>
<div class="c l" style="left:1465.5px;top:339.5px;width:82.0px">L</div>
<div class="c r" style="left:1547.5px;top:339.5px;width:48.0px"></div>
<div class="c r" style="left:1595.5px;top:339.5px;width:72.0px">3/4"</div>
<div class="c r" style="left:1667.5px;top:339.5px;width:100.5px">2' 1 11/16"</div>
<div class="c r" style="left:1768.0px;top:339.5px;width:115.5px">2' 1 11/16"</div>
<div class="c l" style="left:-1.5px;top:359.5px;width:71.0px">C11-29</div>
<div class="c l" style="left:69.5px;top:359.5px;width:166.0px">Upper Face Frames</div>
<div class="c l" style="left:235.5px;top:359.5px;width:314.0px">C11UFF Corner Top Rail</div>
<div class="c r" style="left:549.5px;top:359.5px;width:66.0px">1</div>
<div class="c r" style="left:615.5px;top:359.5px;width:72.5px">27/32"</div>
<div class="c r" style="left:688.0px;top:359.5px;width:109.5px">2"</div>
<div class="c r" style="left:797.5px;top:359.5px;width:111.0px">1' 5"</div>
<div class="c l" style="left:908.5px;top:359.5px;width:129.0px">Rough Lumber</div>
<div class="c l" style="left:1037.5px;top:359.5px;width:249.0px">Maple</div>
<div class="c ce na" style="left:1286.5px;top:359.5px;width:103.0px">N/A</div>
<div class="c l na" style="left:1389.5px;top:359.5px;width:76.0px">N/A</div>
<div class="c l" style="left:1465.5px;top:359.5px;width:82.0px">T</div>
<div class="c r" style="left:1547.5px;top:359.5px;width:48.0px"></div>
<div class="c r" style="left:1595.5px;top:359.5px;width:72.0px">13/16"</div>
<div class="c r" style="left:1667.5px;top:359.5px;width:100.5px">2"</div>
<div class="c r" style="left:1768.0px;top:359.5px;width:115.5px">1' 5"</div>
<div class="c l" style="left:-1.5px;top:379.5px;width:71.0px">C11-32</div>
<div class="c l" style="left:69.5px;top:379.5px;width:166.0px">Upper Face Frames</div>
<div class="c l" style="left:235.5px;top:379.5px;width:314.0px">C11UFF Right Corner Connector Stile</div>
<div class="c r" style="left:549.5px;top:379.5px;width:66.0px">1</div>
<div class="c r" style="left:615.5px;top:379.5px;width:72.5px">27/32"</div>
<div class="c r" style="left:688.0px;top:379.5px;width:109.5px">1 27/32"</div>
<div class="c r" style="left:797.5px;top:379.5px;width:111.0px">3' 5"</div>
<div class="c l" style="left:908.5px;top:379.5px;width:129.0px">Rough Lumber</div>
<div class="c l" style="left:1037.5px;top:379.5px;width:249.0px">Maple</div>
<div class="c ce na" style="left:1286.5px;top:379.5px;width:103.0px">N/A</div>
<div class="c l na" style="left:1389.5px;top:379.5px;width:76.0px">N/A</div>
<div class="c l" style="left:1465.5px;top:379.5px;width:82.0px">T</div>
<div class="c r" style="left:1547.5px;top:379.5px;width:48.0px"></div>
<div class="c r" style="left:1595.5px;top:379.5px;width:72.0px">13/16"</div>
<div class="c r" style="left:1667.5px;top:379.5px;width:100.5px">1 27/32"</div>
<div class="c r" style="left:1768.0px;top:379.5px;width:115.5px">3' 5"</div>
<div class="c l" style="left:-1.5px;top:399.5px;width:71.0px">C12-21</div>
<div class="c l" style="left:69.5px;top:399.5px;width:166.0px">Upper Face Frames</div>
<div class="c l" style="left:235.5px;top:399.5px;width:314.0px">C12UFF Bottom Rail</div>
<div class="c r" style="left:549.5px;top:399.5px;width:66.0px">1</div>
<div class="c r" style="left:615.5px;top:399.5px;width:72.5px">27/32"</div>
<div class="c r" style="left:688.0px;top:399.5px;width:109.5px">1 1/2"</div>
<div class="c r" style="left:797.5px;top:399.5px;width:111.0px">1' 6 9/32"</div>
<div class="c l" style="left:908.5px;top:399.5px;width:129.0px">Rough Lumber</div>
<div class="c l" style="left:1037.5px;top:399.5px;width:249.0px">Maple</div>
<div class="c ce na" style="left:1286.5px;top:399.5px;width:103.0px">N/A</div>
<div class="c l na" style="left:1389.5px;top:399.5px;width:76.0px">N/A</div>
<div class="c l" style="left:1465.5px;top:399.5px;width:82.0px">T</div>
<div class="c r" style="left:1547.5px;top:399.5px;width:48.0px"></div>
<div class="c r" style="left:1595.5px;top:399.5px;width:72.0px">13/16"</div>
<div class="c r" style="left:1667.5px;top:399.5px;width:100.5px">1 1/2"</div>
<div class="c r" style="left:1768.0px;top:399.5px;width:115.5px">1' 6 9/32"</div>
<div class="c l" style="left:-1.5px;top:419.5px;width:71.0px">C11-18</div>
<div class="c l" style="left:69.5px;top:419.5px;width:166.0px">Upper Doors</div>
<div class="c l" style="left:235.5px;top:419.5px;width:314.0px">C11UD2 Bottom Door Rail</div>
<div class="c r" style="left:549.5px;top:419.5px;width:66.0px">1</div>
<div class="c r" style="left:615.5px;top:419.5px;width:72.5px">13/16"</div>
<div class="c r" style="left:688.0px;top:419.5px;width:109.5px">2 3/8"</div>
<div class="c r" style="left:797.5px;top:419.5px;width:111.0px">1' 1 1/16"</div>
<div class="c l" style="left:908.5px;top:419.5px;width:129.0px">Rough Lumber</div>
<div class="c l" style="left:1037.5px;top:419.5px;width:249.0px">Maple</div>
<div class="c ce na" style="left:1286.5px;top:419.5px;width:103.0px">N/A</div>
<div class="c l na" style="left:1389.5px;top:419.5px;width:76.0px">N/A</div>
<div class="c l" style="left:1465.5px;top:419.5px;width:82.0px">T / W</div>
<div class="c r" style="left:1547.5px;top:419.5px;width:48.0px"></div>
<div class="c r" style="left:1595.5px;top:419.5px;width:72.0px">3/4"</div>
<div class="c r" style="left:1667.5px;top:419.5px;width:100.5px">2 1/4"</div>
<div class="c r" style="left:1768.0px;top:419.5px;width:115.5px">1' 1 1/16"</div>
<div class="c l" style="left:-1.5px;top:439.5px;width:71.0px">C9-15</div>
<div class="c l" style="left:69.5px;top:439.5px;width:166.0px">Upper Boxes</div>
<div class="c l" style="left:235.5px;top:439.5px;width:314.0px">C9USP Right End Sheet</div>
<div class="c r" style="left:549.5px;top:439.5px;width:66.0px">1</div>
<div class="c r" style="left:615.5px;top:439.5px;width:72.5px">3/4"</div>
<div class="c r" style="left:688.0px;top:439.5px;width:109.5px">2' 1 11/16"</div>
<div class="c r" style="left:797.5px;top:439.5px;width:111.0px">7' 11"</div>
<div class="c l" style="left:908.5px;top:439.5px;width:129.0px">Sheet Good</div>
<div class="c l" style="left:1037.5px;top:439.5px;width:249.0px">Maple plywood</div>
<div class="c ce" style="left:1286.5px;top:439.5px;width:103.0px"><span class="cb"></span></div>
<div class="c l" style="left:1389.5px;top:439.5px;width:76.0px">None</div>
<div class="c l" style="left:1465.5px;top:439.5px;width:82.0px">W</div>
<div class="c r" style="left:1547.5px;top:439.5px;width:48.0px"></div>
<div class="c r" style="left:1595.5px;top:439.5px;width:72.0px">3/4"</div>
<div class="c r" style="left:1667.5px;top:439.5px;width:100.5px">2' 1 3/16"</div>
<div class="c r" style="left:1768.0px;top:439.5px;width:115.5px">7' 11"</div>
<div class="c l" style="left:-1.5px;top:459.5px;width:71.0px">C12-18</div>
<div class="c l" style="left:69.5px;top:459.5px;width:166.0px">Upper End Panels</div>
<div class="c l" style="left:235.5px;top:459.5px;width:314.0px">C12UEP Right End Front Stile</div>
<div class="c r" style="left:549.5px;top:459.5px;width:66.0px">1</div>
<div class="c r" style="left:615.5px;top:459.5px;width:72.5px">27/32"</div>
<div class="c r" style="left:688.0px;top:459.5px;width:109.5px">1 9/16"</div>
<div class="c r" style="left:797.5px;top:459.5px;width:111.0px">3' 2"</div>
<div class="c l" style="left:908.5px;top:459.5px;width:129.0px">Rough Lumber</div>
<div class="c l" style="left:1037.5px;top:459.5px;width:249.0px">Maple</div>
<div class="c ce na" style="left:1286.5px;top:459.5px;width:103.0px">N/A</div>
<div class="c l na" style="left:1389.5px;top:459.5px;width:76.0px">N/A</div>
<div class="c l" style="left:1465.5px;top:459.5px;width:82.0px">T / W</div>
<div class="c r" style="left:1547.5px;top:459.5px;width:48.0px"></div>
<div class="c r" style="left:1595.5px;top:459.5px;width:72.0px">13/16"</div>
<div class="c r" style="left:1667.5px;top:459.5px;width:100.5px">1 1/2"</div>
<div class="c r" style="left:1768.0px;top:459.5px;width:115.5px">3' 2"</div>
<div class="c l" style="left:-1.5px;top:479.5px;width:71.0px">C11-14</div>
<div class="c l" style="left:69.5px;top:479.5px;width:166.0px">Upper Doors</div>
<div class="c l" style="left:235.5px;top:479.5px;width:314.0px">C11UD1 Bottom Door Rail</div>
<div class="c r" style="left:549.5px;top:479.5px;width:66.0px">2</div>
<div class="c r" style="left:615.5px;top:479.5px;width:72.5px">13/16"</div>
<div class="c r" style="left:688.0px;top:479.5px;width:109.5px">2 3/8"</div>
<div class="c r" style="left:797.5px;top:479.5px;width:111.0px">10 5/64"</div>
<div class="c l" style="left:908.5px;top:479.5px;width:129.0px">Rough Lumber</div>
<div class="c l" style="left:1037.5px;top:479.5px;width:249.0px">Maple</div>
<div class="c ce na" style="left:1286.5px;top:479.5px;width:103.0px">N/A</div>
<div class="c l na" style="left:1389.5px;top:479.5px;width:76.0px">N/A</div>
<div class="c l" style="left:1465.5px;top:479.5px;width:82.0px">T / W</div>
<div class="c r" style="left:1547.5px;top:479.5px;width:48.0px"></div>
<div class="c r" style="left:1595.5px;top:479.5px;width:72.0px">3/4"</div>
<div class="c r" style="left:1667.5px;top:479.5px;width:100.5px">2 1/4"</div>
<div class="c r" style="left:1768.0px;top:479.5px;width:115.5px">10 5/64"</div>
<div class="c l" style="left:-1.5px;top:499.5px;width:71.0px">C9-7</div>
<div class="c l" style="left:69.5px;top:499.5px;width:166.0px">Upper Doors</div>
<div class="c l" style="left:235.5px;top:499.5px;width:314.0px">C9UD1 Door Panel</div>
<div class="c r" style="left:549.5px;top:499.5px;width:66.0px">2</div>
<div class="c r" style="left:615.5px;top:499.5px;width:72.5px">1/4"</div>
<div class="c r" style="left:688.0px;top:499.5px;width:109.5px">1' 2 55/64"</div>
<div class="c r" style="left:797.5px;top:499.5px;width:111.0px">1' 5 1/16"</div>
<div class="c l" style="left:908.5px;top:499.5px;width:129.0px">Sheet Good</div>
<div class="c l" style="left:1037.5px;top:499.5px;width:249.0px">Maple plywood</div>
<div class="c ce" style="left:1286.5px;top:499.5px;width:103.0px"><span class="cb"></span></div>
<div class="c l" style="left:1389.5px;top:499.5px;width:76.0px">None</div>
<div class="c l" style="left:1465.5px;top:499.5px;width:82.0px">W / L</div>
<div class="c r" style="left:1547.5px;top:499.5px;width:48.0px"></div>
<div class="c r" style="left:1595.5px;top:499.5px;width:72.0px">1/4"</div>
<div class="c r" style="left:1667.5px;top:499.5px;width:100.5px">1' 2 23/64"</div>
<div class="c r" style="left:1768.0px;top:499.5px;width:115.5px">1' 4 9/16"</div>
<div class="c l" style="left:-1.5px;top:519.5px;width:71.0px">C11-6</div>
<div class="c l" style="left:69.5px;top:519.5px;width:166.0px">Upper Boxes</div>
<div class="c l" style="left:235.5px;top:519.5px;width:314.0px">C11UB1 Top</div>
<div class="c r" style="left:549.5px;top:519.5px;width:66.0px">1</div>
<div class="c r" style="left:615.5px;top:519.5px;width:72.5px">3/4"</div>
<div class="c r" style="left:688.0px;top:519.5px;width:109.5px">11 11/16"</div>
<div class="c r" style="left:797.5px;top:519.5px;width:111.0px">2' 4 3/16"</div>
<div class="c l" style="left:908.5px;top:519.5px;width:129.0px">Sheet Good</div>
<div class="c l" style="left:1037.5px;top:519.5px;width:249.0px">Maple Plywood - Pre-Finished</div>
<div class="c ce" style="left:1286.5px;top:519.5px;width:103.0px"><span class="cb"></span></div>
<div class="c l" style="left:1389.5px;top:519.5px;width:76.0px">None</div>
<div class="c l" style="left:1465.5px;top:519.5px;width:82.0px">W / L</div>
<div class="c r" style="left:1547.5px;top:519.5px;width:48.0px"></div>
<div class="c r" style="left:1595.5px;top:519.5px;width:72.0px">3/4"</div>
<div class="c r" style="left:1667.5px;top:519.5px;width:100.5px">11 7/16"</div>
<div class="c r" style="left:1768.0px;top:519.5px;width:115.5px">2' 3 15/16"</div>
<div class="c l" style="left:-1.5px;top:539.5px;width:71.0px">C12-13</div>
<div class="c l" style="left:69.5px;top:539.5px;width:166.0px">Upper End Panels</div>
<div class="c l" style="left:235.5px;top:539.5px;width:314.0px">C12UEP Left End Front Stile</div>
<div class="c r" style="left:549.5px;top:539.5px;width:66.0px">1</div>
<div class="c r" style="left:615.5px;top:539.5px;width:72.5px">27/32"</div>
<div class="c r" style="left:688.0px;top:539.5px;width:109.5px">1 9/16"</div>
<div class="c r" style="left:797.5px;top:539.5px;width:111.0px">3' 2"</div>
<div class="c l" style="left:908.5px;top:539.5px;width:129.0px">Rough Lumber</div>
<div class="c l" style="left:1037.5px;top:539.5px;width:249.0px">Maple</div>
<div class="c ce na" style="left:1286.5px;top:539.5px;width:103.0px">N/A</div>
<div class="c l na" style="left:1389.5px;top:539.5px;width:76.0px">N/A</div>
<div class="c l" style="left:1465.5px;top:539.5px;width:82.0px">T / W</div>
<div class="c r" style="left:1547.5px;top:539.5px;width:48.0px"></div>
<div class="c r" style="left:1595.5px;top:539.5px;width:72.0px">13/16"</div>
<div class="c r" style="left:1667.5px;top:539.5px;width:100.5px">1 1/2"</div>
<div class="c r" style="left:1768.0px;top:539.5px;width:115.5px">3' 2"</div>
<div class="c l" style="left:-1.5px;top:559.5px;width:71.0px">C11-25</div>
<div class="c l" style="left:69.5px;top:559.5px;width:166.0px">Upper End Panels</div>
<div class="c l" style="left:235.5px;top:559.5px;width:314.0px">C11UEP Right End Panel</div>
<div class="c r" style="left:549.5px;top:559.5px;width:66.0px">1</div>
<div class="c r" style="left:615.5px;top:559.5px;width:72.5px">1/4"</div>
<div class="c r" style="left:688.0px;top:559.5px;width:109.5px">11 1/4"</div>
<div class="c r" style="left:797.5px;top:559.5px;width:111.0px">3' 2 1/4"</div>
<div class="c l" style="left:908.5px;top:559.5px;width:129.0px">Sheet Good</div>
<div class="c l" style="left:1037.5px;top:559.5px;width:249.0px">Maple plywood</div>
<div class="c ce" style="left:1286.5px;top:559.5px;width:103.0px"><span class="cb"></span></div>
<div class="c l" style="left:1389.5px;top:559.5px;width:76.0px">None</div>
<div class="c l" style="left:1465.5px;top:559.5px;width:82.0px">W / L</div>
<div class="c r" style="left:1547.5px;top:559.5px;width:48.0px"></div>
<div class="c r" style="left:1595.5px;top:559.5px;width:72.0px">1/4"</div>
<div class="c r" style="left:1667.5px;top:559.5px;width:100.5px">10 3/4"</div>
<div class="c r" style="left:1768.0px;top:559.5px;width:115.5px">3' 1 3/4"</div>
<div class="c l" style="left:-1.5px;top:579.5px;width:71.0px">C12-8</div>
<div class="c l" style="left:69.5px;top:579.5px;width:166.0px">Upper Doors</div>
<div class="c l" style="left:235.5px;top:579.5px;width:314.0px">C12UD1 Door Panel</div>
<div class="c r" style="left:549.5px;top:579.5px;width:66.0px">1</div>
<div class="c r" style="left:615.5px;top:579.5px;width:72.5px">1/4"</div>
<div class="c r" style="left:688.0px;top:579.5px;width:109.5px">1' 2 27/32"</div>
<div class="c r" style="left:797.5px;top:579.5px;width:111.0px">2' 7 1/16"</div>
<div class="c l" style="left:908.5px;top:579.5px;width:129.0px">Sheet Good</div>
<div class="c l" style="left:1037.5px;top:579.5px;width:249.0px">Maple plywood</div>
<div class="c ce" style="left:1286.5px;top:579.5px;width:103.0px"><span class="cb"></span></div>
<div class="c l" style="left:1389.5px;top:579.5px;width:76.0px">None</div>
<div class="c l" style="left:1465.5px;top:579.5px;width:82.0px">W / L</div>
<div class="c r" style="left:1547.5px;top:579.5px;width:48.0px"></div>
<div class="c r" style="left:1595.5px;top:579.5px;width:72.0px">1/4"</div>
<div class="c r" style="left:1667.5px;top:579.5px;width:100.5px">1' 2 11/32"</div>
<div class="c r" style="left:1768.0px;top:579.5px;width:115.5px">2' 6 9/16"</div>
<div class="c l" style="left:-1.5px;top:599.5px;width:71.0px">C11-34</div>
<div class="c l" style="left:69.5px;top:599.5px;width:166.0px">Upper Face Frames</div>
<div class="c l" style="left:235.5px;top:599.5px;width:314.0px">C11UFF Right End Panel Stile</div>
<div class="c r" style="left:549.5px;top:599.5px;width:66.0px">1</div>
<div class="c r" style="left:615.5px;top:599.5px;width:72.5px">27/32"</div>
<div class="c r" style="left:688.0px;top:599.5px;width:109.5px">1 9/16"</div>
<div class="c r" style="left:797.5px;top:599.5px;width:111.0px">3' 5"</div>
<div class="c l" style="left:908.5px;top:599.5px;width:129.0px">Rough Lumber</div>
<div class="c l" style="left:1037.5px;top:599.5px;width:249.0px">Maple</div>
<div class="c ce na" style="left:1286.5px;top:599.5px;width:103.0px">N/A</div>
<div class="c l na" style="left:1389.5px;top:599.5px;width:76.0px">N/A</div>
<div class="c l" style="left:1465.5px;top:599.5px;width:82.0px">T</div>
<div class="c r" style="left:1547.5px;top:599.5px;width:48.0px"></div>
<div class="c r" style="left:1595.5px;top:599.5px;width:72.0px">13/16"</div>
<div class="c r" style="left:1667.5px;top:599.5px;width:100.5px">1 9/16"</div>
<div class="c r" style="left:1768.0px;top:599.5px;width:115.5px">3' 5"</div>
<div class="c l" style="left:-1.5px;top:619.5px;width:71.0px">C9-8</div>
<div class="c l" style="left:69.5px;top:619.5px;width:166.0px">Upper Doors</div>
<div class="c l" style="left:235.5px;top:619.5px;width:314.0px">C9UD1 Door Stile</div>
<div class="c r" style="left:549.5px;top:619.5px;width:66.0px">4</div>
<div class="c r" style="left:615.5px;top:619.5px;width:72.5px">13/16"</div>
<div class="c r" style="left:688.0px;top:619.5px;width:109.5px">2 3/8"</div>
<div class="c r" style="left:797.5px;top:619.5px;width:111.0px">1' 8 7/16"</div>
<div class="c l" style="left:908.5px;top:619.5px;width:129.0px">Rough Lumber</div>
<div class="c l" style="left:1037.5px;top:619.5px;width:249.0px">Maple</div>
<div class="c ce na" style="left:1286.5px;top:619.5px;width:103.0px">N/A</div>
<div class="c l na" style="left:1389.5px;top:619.5px;width:76.0px">N/A</div>
<div class="c l" style="left:1465.5px;top:619.5px;width:82.0px">T / W / L</div>
<div class="c r" style="left:1547.5px;top:619.5px;width:48.0px"></div>
<div class="c r" style="left:1595.5px;top:619.5px;width:72.0px">3/4"</div>
<div class="c r" style="left:1667.5px;top:619.5px;width:100.5px">2 1/4"</div>
<div class="c r" style="left:1768.0px;top:619.5px;width:115.5px">1' 8 5/16"</div>
<div class="c l" style="left:-1.5px;top:639.5px;width:71.0px">C11-16</div>
<div class="c l" style="left:69.5px;top:639.5px;width:166.0px">Upper Doors</div>
<div class="c l" style="left:235.5px;top:639.5px;width:314.0px">C11UD1 Door Stile</div>
<div class="c r" style="left:549.5px;top:639.5px;width:66.0px">4</div>
<div class="c r" style="left:615.5px;top:639.5px;width:72.5px">13/16"</div>
<div class="c r" style="left:688.0px;top:639.5px;width:109.5px">2 3/8"</div>
<div class="c r" style="left:797.5px;top:639.5px;width:111.0px">3' 1 7/16"</div>
<div class="c l" style="left:908.5px;top:639.5px;width:129.0px">Rough Lumber</div>
<div class="c l" style="left:1037.5px;top:639.5px;width:249.0px">Maple</div>
<div class="c ce na" style="left:1286.5px;top:639.5px;width:103.0px">N/A</div>
<div class="c l na" style="left:1389.5px;top:639.5px;width:76.0px">N/A</div>
<div class="c l" style="left:1465.5px;top:639.5px;width:82.0px">T / W / L</div>
<div class="c r" style="left:1547.5px;top:639.5px;width:48.0px"></div>
<div class="c r" style="left:1595.5px;top:639.5px;width:72.0px">3/4"</div>
<div class="c r" style="left:1667.5px;top:639.5px;width:100.5px">2 1/4"</div>
<div class="c r" style="left:1768.0px;top:639.5px;width:115.5px">3' 1 5/16"</div>
<div class="c l" style="left:-1.5px;top:659.5px;width:71.0px">C9-9</div>
<div class="c l" style="left:69.5px;top:659.5px;width:166.0px">Upper Doors</div>
<div class="c l" style="left:235.5px;top:659.5px;width:314.0px">C9UD1 Top Door Rail</div>
<div class="c r" style="left:549.5px;top:659.5px;width:66.0px">2</div>
<div class="c r" style="left:615.5px;top:659.5px;width:72.5px">13/16"</div>
<div class="c r" style="left:688.0px;top:659.5px;width:109.5px">2 3/8"</div>
<div class="c r" style="left:797.5px;top:659.5px;width:111.0px">1' 2 23/64"</div>
<div class="c l" style="left:908.5px;top:659.5px;width:129.0px">Rough Lumber</div>
<div class="c l" style="left:1037.5px;top:659.5px;width:249.0px">Maple</div>
<div class="c ce na" style="left:1286.5px;top:659.5px;width:103.0px">N/A</div>
<div class="c l na" style="left:1389.5px;top:659.5px;width:76.0px">N/A</div>
<div class="c l" style="left:1465.5px;top:659.5px;width:82.0px">T / W</div>
<div class="c r" style="left:1547.5px;top:659.5px;width:48.0px"></div>
<div class="c r" style="left:1595.5px;top:659.5px;width:72.0px">3/4"</div>
<div class="c r" style="left:1667.5px;top:659.5px;width:100.5px">2 1/4"</div>
<div class="c r" style="left:1768.0px;top:659.5px;width:115.5px">1' 2 23/64"</div>
<div class="c l" style="left:-1.5px;top:679.5px;width:71.0px">C11-23</div>
<div class="c l" style="left:69.5px;top:679.5px;width:166.0px">Upper End Panels</div>
<div class="c l" style="left:235.5px;top:679.5px;width:314.0px">C11UEP Right End Bottom Rail</div>
<div class="c r" style="left:549.5px;top:679.5px;width:66.0px">1</div>
<div class="c r" style="left:615.5px;top:679.5px;width:72.5px">27/32"</div>
<div class="c r" style="left:688.0px;top:679.5px;width:109.5px">1 9/16"</div>
<div class="c r" style="left:797.5px;top:679.5px;width:111.0px">10 3/4"</div>
<div class="c l" style="left:908.5px;top:679.5px;width:129.0px">Rough Lumber</div>
<div class="c l" style="left:1037.5px;top:679.5px;width:249.0px">Maple</div>
<div class="c ce na" style="left:1286.5px;top:679.5px;width:103.0px">N/A</div>
<div class="c l na" style="left:1389.5px;top:679.5px;width:76.0px">N/A</div>
<div class="c l" style="left:1465.5px;top:679.5px;width:82.0px">T / W</div>
<div class="c r" style="left:1547.5px;top:679.5px;width:48.0px"></div>
<div class="c r" style="left:1595.5px;top:679.5px;width:72.0px">13/16"</div>
<div class="c r" style="left:1667.5px;top:679.5px;width:100.5px">1 1/2"</div>
<div class="c r" style="left:1768.0px;top:679.5px;width:115.5px">10 3/4"</div>
<div class="c l" style="left:-1.5px;top:699.5px;width:71.0px">C12-20</div>
<div class="c l" style="left:69.5px;top:699.5px;width:166.0px">Upper End Panels</div>
<div class="c l" style="left:235.5px;top:699.5px;width:314.0px">C12UEP Right End Top Rail</div>
<div class="c r" style="left:549.5px;top:699.5px;width:66.0px">1</div>
<div class="c r" style="left:615.5px;top:699.5px;width:72.5px">27/32"</div>
<div class="c r" style="left:688.0px;top:699.5px;width:109.5px">2 9/16"</div>
<div class="c r" style="left:797.5px;top:699.5px;width:111.0px">10 3/4"</div>
<div class="c l" style="left:908.5px;top:699.5px;width:129.0px">Rough Lumber</div>
<div class="c l" style="left:1037.5px;top:699.5px;width:249.0px">Maple</div>
<div class="c ce na" style="left:1286.5px;top:699.5px;width:103.0px">N/A</div>
<div class="c l na" style="left:1389.5px;top:699.5px;width:76.0px">N/A</div>
<div class="c l" style="left:1465.5px;top:699.5px;width:82.0px">T / W</div>
<div class="c r" style="left:1547.5px;top:699.5px;width:48.0px"></div>
<div class="c r" style="left:1595.5px;top:699.5px;width:72.0px">13/16"</div>
<div class="c r" style="left:1667.5px;top:699.5px;width:100.5px">2 1/2"</div>
<div class="c r" style="left:1768.0px;top:699.5px;width:115.5px">10 3/4"</div>
<div class="c l" style="left:-1.5px;top:719.5px;width:71.0px">C9-4</div>
<div class="c l" style="left:69.5px;top:719.5px;width:166.0px">Upper Boxes</div>
<div class="c l" style="left:235.5px;top:719.5px;width:314.0px">C9UB1 Right Side</div>
<div class="c r" style="left:549.5px;top:719.5px;width:66.0px">1</div>
<div class="c r" style="left:615.5px;top:719.5px;width:72.5px">3/4"</div>
<div class="c r" style="left:688.0px;top:719.5px;width:109.5px">2' 7/16"</div>
<div class="c r" style="left:797.5px;top:719.5px;width:111.0px">7' 11"</div>
<div class="c l" style="left:908.5px;top:719.5px;width:129.0px">Sheet Good</div>
<div class="c l" style="left:1037.5px;top:719.5px;width:249.0px">Maple Plywood - Pre-Finished</div>
<div class="c ce" style="left:1286.5px;top:719.5px;width:103.0px"><span class="cb"></span></div>
<div class="c l" style="left:1389.5px;top:719.5px;width:76.0px">None</div>
<div class="c l" style="left:1465.5px;top:719.5px;width:82.0px">W</div>
<div class="c r" style="left:1547.5px;top:719.5px;width:48.0px"></div>
<div class="c r" style="left:1595.5px;top:719.5px;width:72.0px">3/4"</div>
<div class="c r" style="left:1667.5px;top:719.5px;width:100.5px">2' 3/16"</div>
<div class="c r" style="left:1768.0px;top:719.5px;width:115.5px">7' 11"</div>
<div class="c l" style="left:-1.5px;top:739.5px;width:71.0px">C14-6</div>
<div class="c l" style="left:69.5px;top:739.5px;width:166.0px">Upper Boxes</div>
<div class="c l" style="left:235.5px;top:739.5px;width:314.0px">C14UB1 Top</div>
<div class="c r" style="left:549.5px;top:739.5px;width:66.0px">1</div>
<div class="c r" style="left:615.5px;top:739.5px;width:72.5px">3/4"</div>
<div class="c r" style="left:688.0px;top:739.5px;width:109.5px">11 11/16"</div>
<div class="c r" style="left:797.5px;top:739.5px;width:111.0px">2' 3 5/8"</div>
<div class="c l" style="left:908.5px;top:739.5px;width:129.0px">Sheet Good</div>
<div class="c l" style="left:1037.5px;top:739.5px;width:249.0px">Maple Plywood - Pre-Finished</div>
<div class="c ce" style="left:1286.5px;top:739.5px;width:103.0px"><span class="cb"></span></div>
<div class="c l" style="left:1389.5px;top:739.5px;width:76.0px">None</div>
<div class="c l" style="left:1465.5px;top:739.5px;width:82.0px">W / L</div>
<div class="c r" style="left:1547.5px;top:739.5px;width:48.0px"></div>
<div class="c r" style="left:1595.5px;top:739.5px;width:72.0px">3/4"</div>
<div class="c r" style="left:1667.5px;top:739.5px;width:100.5px">11 7/16"</div>
<div class="c r" style="left:1768.0px;top:739.5px;width:115.5px">2' 3 3/8"</div>
<div class="c l" style="left:-1.5px;top:759.5px;width:71.0px">C12-22</div>
<div class="c l" style="left:69.5px;top:759.5px;width:166.0px">Upper Face Frames</div>
<div class="c l" style="left:235.5px;top:759.5px;width:314.0px">C12UFF Left End Panel Stile</div>
<div class="c r" style="left:549.5px;top:759.5px;width:66.0px">1</div>
<div class="c r" style="left:615.5px;top:759.5px;width:72.5px">27/32"</div>
<div class="c r" style="left:688.0px;top:759.5px;width:109.5px">1 9/16"</div>
<div class="c r" style="left:797.5px;top:759.5px;width:111.0px">3' 2"</div>
<div class="c l" style="left:908.5px;top:759.5px;width:129.0px">Rough Lumber</div>
<div class="c l" style="left:1037.5px;top:759.5px;width:249.0px">Maple</div>
<div class="c ce na" style="left:1286.5px;top:759.5px;width:103.0px">N/A</div>
<div class="c l na" style="left:1389.5px;top:759.5px;width:76.0px">N/A</div>
<div class="c l" style="left:1465.5px;top:759.5px;width:82.0px">T</div>
<div class="c r" style="left:1547.5px;top:759.5px;width:48.0px"></div>
<div class="c r" style="left:1595.5px;top:759.5px;width:72.0px">13/16"</div>
<div class="c r" style="left:1667.5px;top:759.5px;width:100.5px">1 9/16"</div>
<div class="c r" style="left:1768.0px;top:759.5px;width:115.5px">3' 2"</div>
<div class="c l" style="left:-1.5px;top:779.5px;width:71.0px">C10-5</div>
<div class="c l" style="left:69.5px;top:779.5px;width:166.0px">Upper Boxes</div>
<div class="c l" style="left:235.5px;top:779.5px;width:314.0px">C10UB1 Shelf</div>
<div class="c r" style="left:549.5px;top:779.5px;width:66.0px">2</div>
<div class="c r" style="left:615.5px;top:779.5px;width:72.5px">3/4"</div>
<div class="c r" style="left:688.0px;top:779.5px;width:109.5px">11 3/16"</div>
<div class="c r" style="left:797.5px;top:779.5px;width:111.0px">1' 8 47/64"</div>
<div class="c l" style="left:908.5px;top:779.5px;width:129.0px">Sheet Good</div>
<div class="c l" style="left:1037.5px;top:779.5px;width:249.0px">Maple Plywood - Pre-Finished</div>
<div class="c ce" style="left:1286.5px;top:779.5px;width:103.0px"><span class="cb"></span></div>
<div class="c l" style="left:1389.5px;top:779.5px;width:76.0px">None</div>
<div class="c l" style="left:1465.5px;top:779.5px;width:82.0px">L</div>
<div class="c r" style="left:1547.5px;top:779.5px;width:48.0px"></div>
<div class="c r" style="left:1595.5px;top:779.5px;width:72.0px">3/4"</div>
<div class="c r" style="left:1667.5px;top:779.5px;width:100.5px">11 3/16"</div>
<div class="c r" style="left:1768.0px;top:779.5px;width:115.5px">1' 8 31/64"</div>
<div class="c l" style="left:-1.5px;top:799.5px;width:71.0px">C12-16</div>
<div class="c l" style="left:69.5px;top:799.5px;width:166.0px">Upper End Panels</div>
<div class="c l" style="left:235.5px;top:799.5px;width:314.0px">C12UEP Right End Back Stile</div>
<div class="c r" style="left:549.5px;top:799.5px;width:66.0px">1</div>
<div class="c r" style="left:615.5px;top:799.5px;width:72.5px">27/32"</div>
<div class="c r" style="left:688.0px;top:799.5px;width:109.5px">2 1/16"</div>
<div class="c r" style="left:797.5px;top:799.5px;width:111.0px">3' 2"</div>
<div class="c l" style="left:908.5px;top:799.5px;width:129.0px">Rough Lumber</div>
<div class="c l" style="left:1037.5px;top:799.5px;width:249.0px">Maple</div>
<div class="c ce na" style="left:1286.5px;top:799.5px;width:103.0px">N/A</div>
<div class="c l na" style="left:1389.5px;top:799.5px;width:76.0px">N/A</div>
<div class="c l" style="left:1465.5px;top:799.5px;width:82.0px">T / W</div>
<div class="c r" style="left:1547.5px;top:799.5px;width:48.0px"></div>
<div class="c r" style="left:1595.5px;top:799.5px;width:72.0px">13/16"</div>
<div class="c r" style="left:1667.5px;top:799.5px;width:100.5px">1 1/2"</div>
<div class="c r" style="left:1768.0px;top:799.5px;width:115.5px">3' 2"</div>
<div class="c l" style="left:-1.5px;top:819.5px;width:71.0px">C14-10</div>
<div class="c l" style="left:69.5px;top:819.5px;width:166.0px">Upper Doors</div>
<div class="c l" style="left:235.5px;top:819.5px;width:314.0px">C14UD1 Top Door Rail</div>
<div class="c r" style="left:549.5px;top:819.5px;width:66.0px">2</div>
<div class="c r" style="left:615.5px;top:819.5px;width:72.5px">13/16"</div>
<div class="c r" style="left:688.0px;top:819.5px;width:109.5px">2 3/8"</div>
<div class="c r" style="left:797.5px;top:819.5px;width:111.0px">9 51/64"</div>
<div class="c l" style="left:908.5px;top:819.5px;width:129.0px">Rough Lumber</div>
<div class="c l" style="left:1037.5px;top:819.5px;width:249.0px">Maple</div>
<div class="c ce na" style="left:1286.5px;top:819.5px;width:103.0px">N/A</div>
<div class="c l na" style="left:1389.5px;top:819.5px;width:76.0px">N/A</div>
<div class="c l" style="left:1465.5px;top:819.5px;width:82.0px">T / W</div>
<div class="c r" style="left:1547.5px;top:819.5px;width:48.0px"></div>
<div class="c r" style="left:1595.5px;top:819.5px;width:72.0px">3/4"</div>
<div class="c r" style="left:1667.5px;top:819.5px;width:100.5px">2 1/4"</div>
<div class="c r" style="left:1768.0px;top:819.5px;width:115.5px">9 51/64"</div>
<div class="c l" style="left:-1.5px;top:839.5px;width:71.0px">C11-20</div>
<div class="c l" style="left:69.5px;top:839.5px;width:166.0px">Upper Doors</div>
<div class="c l" style="left:235.5px;top:839.5px;width:314.0px">C11UD2 Door Stile</div>
<div class="c r" style="left:549.5px;top:839.5px;width:66.0px">2</div>
<div class="c r" style="left:615.5px;top:839.5px;width:72.5px">13/16"</div>
<div class="c r" style="left:688.0px;top:839.5px;width:109.5px">2 3/8"</div>
<div class="c r" style="left:797.5px;top:839.5px;width:111.0px">3' 1 7/16"</div>
<div class="c l" style="left:908.5px;top:839.5px;width:129.0px">Rough Lumber</div>
<div class="c l" style="left:1037.5px;top:839.5px;width:249.0px">Maple</div>
<div class="c ce na" style="left:1286.5px;top:839.5px;width:103.0px">N/A</div>
<div class="c l na" style="left:1389.5px;top:839.5px;width:76.0px">N/A</div>
<div class="c l" style="left:1465.5px;top:839.5px;width:82.0px">T / W / L</div>
<div class="c r" style="left:1547.5px;top:839.5px;width:48.0px"></div>
<div class="c r" style="left:1595.5px;top:839.5px;width:72.0px">3/4"</div>
<div class="c r" style="left:1667.5px;top:839.5px;width:100.5px">2 1/4"</div>
<div class="c r" style="left:1768.0px;top:839.5px;width:115.5px">3' 1 5/16"</div>
<div class="c l" style="left:-1.5px;top:859.5px;width:71.0px">C11-28</div>
<div class="c l" style="left:69.5px;top:859.5px;width:166.0px">Upper Face Frames</div>
<div class="c l" style="left:235.5px;top:859.5px;width:314.0px">C11UFF Corner Bottom Rail</div>
<div class="c r" style="left:549.5px;top:859.5px;width:66.0px">1</div>
<div class="c r" style="left:615.5px;top:859.5px;width:72.5px">27/32"</div>
<div class="c r" style="left:688.0px;top:859.5px;width:109.5px">1 1/2"</div>
<div class="c r" style="left:797.5px;top:859.5px;width:111.0px">1' 5"</div>
<div class="c l" style="left:908.5px;top:859.5px;width:129.0px">Rough Lumber</div>
<div class="c l" style="left:1037.5px;top:859.5px;width:249.0px">Maple</div>
<div class="c ce na" style="left:1286.5px;top:859.5px;width:103.0px">N/A</div>
<div class="c l na" style="left:1389.5px;top:859.5px;width:76.0px">N/A</div>
<div class="c l" style="left:1465.5px;top:859.5px;width:82.0px">T</div>
<div class="c r" style="left:1547.5px;top:859.5px;width:48.0px"></div>
<div class="c r" style="left:1595.5px;top:859.5px;width:72.0px">13/16"</div>
<div class="c r" style="left:1667.5px;top:859.5px;width:100.5px">1 1/2"</div>
<div class="c r" style="left:1768.0px;top:859.5px;width:115.5px">1' 5"</div>
<div class="c l" style="left:-1.5px;top:879.5px;width:71.0px">C11-22</div>
<div class="c l" style="left:69.5px;top:879.5px;width:166.0px">Upper End Panels</div>
<div class="c l" style="left:235.5px;top:879.5px;width:314.0px">C11UEP Right End Back Stile</div>
<div class="c r" style="left:549.5px;top:879.5px;width:66.0px">1</div>
<div class="c r" style="left:615.5px;top:879.5px;width:72.5px">27/32"</div>
<div class="c r" style="left:688.0px;top:879.5px;width:109.5px">2 1/16"</div>
<div class="c r" style="left:797.5px;top:879.5px;width:111.0px">3' 5"</div>
<div class="c l" style="left:908.5px;top:879.5px;width:129.0px">Rough Lumber</div>
<div class="c l" style="left:1037.5px;top:879.5px;width:249.0px">Maple</div>
<div class="c ce na" style="left:1286.5px;top:879.5px;width:103.0px">N/A</div>
<div class="c l na" style="left:1389.5px;top:879.5px;width:76.0px">N/A</div>
<div class="c l" style="left:1465.5px;top:879.5px;width:82.0px">T / W</div>
<div class="c r" style="left:1547.5px;top:879.5px;width:48.0px"></div>
<div class="c r" style="left:1595.5px;top:879.5px;width:72.0px">13/16"</div>
<div class="c r" style="left:1667.5px;top:879.5px;width:100.5px">1 1/2"</div>
<div class="c r" style="left:1768.0px;top:879.5px;width:115.5px">3' 5"</div>
<div class="c l" style="left:-1.5px;top:899.5px;width:71.0px">C15-18</div>
<div class="c l" style="left:69.5px;top:899.5px;width:166.0px">Upper Face Frames</div>
<div class="c l" style="left:235.5px;top:899.5px;width:314.0px">C15UFF Right End Panel Stile</div>
<div class="c r" style="left:549.5px;top:899.5px;width:66.0px">1</div>
<div class="c r" style="left:615.5px;top:899.5px;width:72.5px">27/32"</div>
<div class="c r" style="left:688.0px;top:899.5px;width:109.5px">1 9/16"</div>
<div class="c r" style="left:797.5px;top:899.5px;width:111.0px">3' 2"</div>
<div class="c l" style="left:908.5px;top:899.5px;width:129.0px">Rough Lumber</div>
<div class="c l" style="left:1037.5px;top:899.5px;width:249.0px">Maple</div>
<div class="c ce na" style="left:1286.5px;top:899.5px;width:103.0px">N/A</div>
<div class="c l na" style="left:1389.5px;top:899.5px;width:76.0px">N/A</div>
<div class="c l" style="left:1465.5px;top:899.5px;width:82.0px">T</div>
<div class="c r" style="left:1547.5px;top:899.5px;width:48.0px"></div>
<div class="c r" style="left:1595.5px;top:899.5px;width:72.0px">13/16"</div>
<div class="c r" style="left:1667.5px;top:899.5px;width:100.5px">1 9/16"</div>
<div class="c r" style="left:1768.0px;top:899.5px;width:115.5px">3' 2"</div>
</div>
<div class="a" id="sb"></div>
<div class="a" id="thumb"></div>
<svg class="a" style="left:1896px;top:140px" width="12" height="10" viewBox="0 0 12 10"><path d="M2 7 L6 3 L10 7" fill="none" stroke="#333" stroke-width="1.6"/></svg>
<svg class="a" style="left:1896px;top:1033px" width="12" height="10" viewBox="0 0 12 10"><path d="M2 3 L6 7 L10 3" fill="none" stroke="#333" stroke-width="1.6"/></svg>
<div class="a" id="status">
<div class="st" style="left:3px">For Help, press F1</div>
<div class="st" style="left:1797px;color:#999">CAP</div>
<div class="a" style="left:1825px;top:2px;width:1px;height:16px;background:#d0d0d0"></div>
<div class="st" style="left:1830px;color:#111">NUM</div>
<div class="a" style="left:1862px;top:2px;width:1px;height:16px;background:#d0d0d0"></div>
<div class="st" style="left:1868px;color:#999;letter-spacing:-0.7px">SCRL</div>
<div class="a" style="left:1912px;top:7px;width:2px;height:2px;background:#b8b8b8"></div>
<div class="a" style="left:1908px;top:11px;width:2px;height:2px;background:#b8b8b8"></div>
<div class="a" style="left:1912px;top:11px;width:2px;height:2px;background:#b8b8b8"></div>
<div class="a" style="left:1904px;top:15px;width:2px;height:2px;background:#b8b8b8"></div>
<div class="a" style="left:1908px;top:15px;width:2px;height:2px;background:#b8b8b8"></div>
<div class="a" style="left:1912px;top:15px;width:2px;height:2px;background:#b8b8b8"></div>
</div>
</div></body></html>
